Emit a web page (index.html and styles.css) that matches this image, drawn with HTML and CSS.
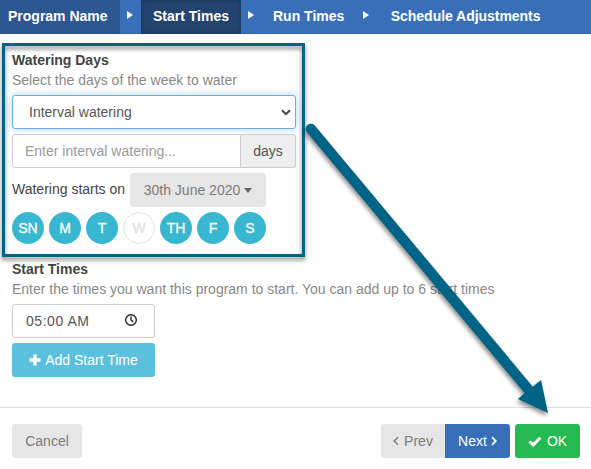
FILE: index.html
```html
<!DOCTYPE html>
<html lang="en">
<head>
  <meta charset="UTF-8">
  <meta name="viewport" content="width=device-width, initial-scale=1.0">
  <title>Program - Start Times</title>
  <link rel="stylesheet" href="styles.css">
</head>
<body>
  <nav class="steps">
    <a class="step step-done">Program Name</a>
    <span class="step-arrow"></span>
    <a class="step step-current">Start Times</a>
    <span class="step-arrow"></span>
    <a class="step">Run Times</a>
    <span class="step-arrow"></span>
    <a class="step step-last">Schedule Adjustments</a>
  </nav>

  <main class="content">
    <section class="watering">
      <h2 class="title">Watering Days</h2>
      <p class="help">Select the days of the week to water</p>
      <div class="control select">
        <span>Interval watering</span>
        <svg class="chevron" viewBox="0 0 10 7"><path d="M1 1.2l4 4 4-4"/></svg>
      </div>
      <div class="input-group">
        <input class="control interval" type="text" placeholder="Enter interval watering...">
        <span class="addon">days</span>
      </div>
      <div class="starts-on">
        <span>Watering starts on</span>
        <button class="btn btn-default">30th June 2020<span class="caret"></span></button>
      </div>
      <div class="days">
        <span class="day">SN</span>
        <span class="day">M</span>
        <span class="day">T</span>
        <span class="day day-off">W</span>
        <span class="day">TH</span>
        <span class="day">F</span>
        <span class="day">S</span>
      </div>
    </section>

    <section class="start-times">
      <h2 class="title">Start Times</h2>
      <p class="help">Enter the times you want this program to start. You can add up to 6 start times</p>
      <div class="control time">
        <span>05:00 AM</span>
        <svg class="clock" viewBox="0 0 14 14"><circle cx="7" cy="7" r="5.3"/><path d="M7 3.6V7l2.4 1.9"/></svg>
      </div>
      <button class="btn btn-info">
        <svg class="plus" viewBox="0 0 12 12"><path d="M6 .5v11M.5 6h11"/></svg>Add Start Time
      </button>
    </section>
  </main>

  <footer class="footer">
    <button class="btn btn-default cancel">Cancel</button>
    <button class="btn btn-default prev"><svg class="angle" viewBox="0 0 6 10"><path d="M5 1.2L1.2 5 5 8.8"/></svg>Prev</button>
    <button class="btn btn-primary next">Next<svg class="angle" viewBox="0 0 6 10"><path d="M1 1.2L4.8 5 1 8.8"/></svg></button>
    <button class="btn btn-success ok"><svg class="check" viewBox="0 0 14 11"><path d="M1.5 5.2l3.8 3.7 7-7.1"/></svg>OK</button>
  </footer>

  <div class="highlight"></div>
  <svg class="pointer" viewBox="0 0 591 469">
    <path class="pointer-line" d="M311 129L528 389"/>
    <path class="pointer-head" d="M548 413l-30-14 6.5-6 9-7 7.5-6z"/>
  </svg>
</body>
</html>
```

FILE: styles.css
```css
* {
  box-sizing: border-box;
}

body {
  margin: 0;
  height: 469px;
  position: relative;
  overflow: hidden;
  display: flex;
  flex-direction: column;
  font: 14px/20px "Liberation Sans", Arial, sans-serif;
  color: #444;
  background: #fff;
}

.steps {
  display: flex;
  height: 34px;
  background: #396fb8;
  border-bottom: 1px solid #3263a6;
  color: #fff;
  font-weight: bold;
}

.step {
  padding: 6px 12px 0 11px;
  white-space: nowrap;
}

.step-done {
  width: 120px;
  padding-left: 8px;
  height: 34px;
  background: #2d5791;
}

.step-current {
  width: 100px;
  height: 34px;
  padding-left: 12px;
  background: #23446f;
  box-shadow: inset 0 0 5px rgba(0, 0, 0, 0.25);
}

.step-last {
  padding-left: 13.5px;
  letter-spacing: -0.04px;
}

.step-arrow {
  width: 21px;
  padding: 11px 0 0 7px;
}

.step-arrow::before {
  content: "";
  display: block;
  width: 0;
  border: 4.5px solid transparent;
  border-width: 4.5px 0 4.5px 6px;
  border-left-color: #fff;
}

.content {
  flex: 1;
  padding: 16px 12px 0;
}

.title {
  margin: 0;
  font-size: 14px;
  line-height: 20px;
  color: #444;
}

.help {
  margin: 0 0 5px;
  color: #888;
  white-space: nowrap;
}

.watering {
  width: 284px;
}

.control {
  display: flex;
  align-items: center;
  height: 34px;
  border: 1px solid #ccc;
  border-radius: 3px;
  background: #fff;
  color: #555;
  font: inherit;
}

.select {
  justify-content: space-between;
  padding: 0 4px 0 16px;
  border-color: #66afe9;
  box-shadow: 0 0 8px rgba(102, 175, 233, 0.5);
}

.chevron {
  width: 10px;
  height: 7px;
  fill: none;
  stroke: #444;
  stroke-width: 2;
}

.input-group {
  display: flex;
  margin: 5px 0;
}

.interval {
  width: 229px;
  padding: 0 12px;
  border-radius: 3px 0 0 3px;
}

.interval::placeholder {
  color: #999;
  opacity: 1;
}

.addon {
  flex: 1;
  padding-top: 6px;
  text-align: center;
  color: #555;
  background: #eee;
  border: 1px solid #ccc;
  border-left: 0;
  border-radius: 0 3px 3px 0;
}

.starts-on {
  display: flex;
  align-items: center;
  gap: 5px;
}

.starts-on > span {
  width: 113px;
  padding-bottom: 2px;
  white-space: nowrap;
}

.btn {
  display: flex;
  align-items: center;
  justify-content: center;
  height: 34px;
  padding: 0 10px;
  border: 0;
  border-radius: 3px;
  font: inherit;
  color: #fff;
  white-space: nowrap;
}

.btn svg {
  flex-shrink: 0;
}

.btn-default {
  background: #e6e6e6;
  color: #7b7b7b;
}

.starts-on .btn {
  width: 136px;
}

.caret {
  margin-left: 4px;
  border: 4.5px solid transparent;
  border-width: 5px 4px 0;
  border-top-color: #666;
}

.days {
  display: flex;
  gap: 5px;
  margin-top: 5px;
}

.day {
  width: 32px;
  height: 32px;
  line-height: 32px;
  border-radius: 50%;
  background: #39b7d0;
  color: #fff;
  text-align: center;
  -webkit-text-stroke: 0.3px currentColor;
}

.day-off {
  line-height: 30px;
  border: 1px solid #e2e2e2;
  background: #fff;
  color: #e2e2e2;
}

.start-times {
  margin-top: 15px;
}

.time {
  width: 143px;
  padding: 0 16px 0 13px;
  justify-content: space-between;
  letter-spacing: 0.55px;
}

.clock {
  width: 14px;
  height: 14px;
  margin-bottom: 2px;
  fill: none;
  stroke: #222;
  stroke-width: 1.4;
}

.btn-info {
  width: 143px;
  margin-top: 5px;
  background: #5bc0de;
}

.plus {
  width: 12px;
  height: 12px;
  margin-right: 4px;
  stroke: #fff;
  stroke-width: 3.4;
}

.footer {
  display: flex;
  height: 62px;
  padding: 16px 11px 0 12px;
  border-top: 1px solid #ddd;
}

.cancel {
  width: 70px;
  margin-right: auto;
}

.prev {
  width: 64px;
  border-radius: 3px 0 0 3px;
}

.next {
  width: 65px;
  margin-right: 5px;
  border-radius: 0 3px 3px 0;
}

.btn-primary {
  background: #396fb8;
}

.btn-success {
  width: 65px;
  background: #25b952;
}

.angle {
  width: 6px;
  height: 10px;
  fill: none;
  stroke: currentColor;
  stroke-width: 1.4;
}

.prev .angle {
  margin-right: 5px;
}

.next .angle {
  margin-left: 4px;
  stroke-width: 1.8;
}

.check {
  width: 14px;
  height: 11px;
  margin-right: 5px;
  fill: none;
  stroke: #fff;
  stroke-width: 3;
}

/* callout drawn over the form */
.highlight {
  position: absolute;
  left: 2px;
  top: 43px;
  width: 303px;
  height: 214px;
  border: 3px solid #006487;
  filter: drop-shadow(0 3px 2px rgba(0, 0, 0, 0.5));
}

.pointer {
  position: absolute;
  left: 0;
  top: 0;
  width: 591px;
  height: 469px;
  filter: drop-shadow(-1px 3px 2px rgba(0, 0, 0, 0.45));
}

.pointer-line {
  stroke: #006487;
  stroke-width: 10.5;
  stroke-linecap: round;
}

.pointer-head {
  fill: #006487;
}
```
